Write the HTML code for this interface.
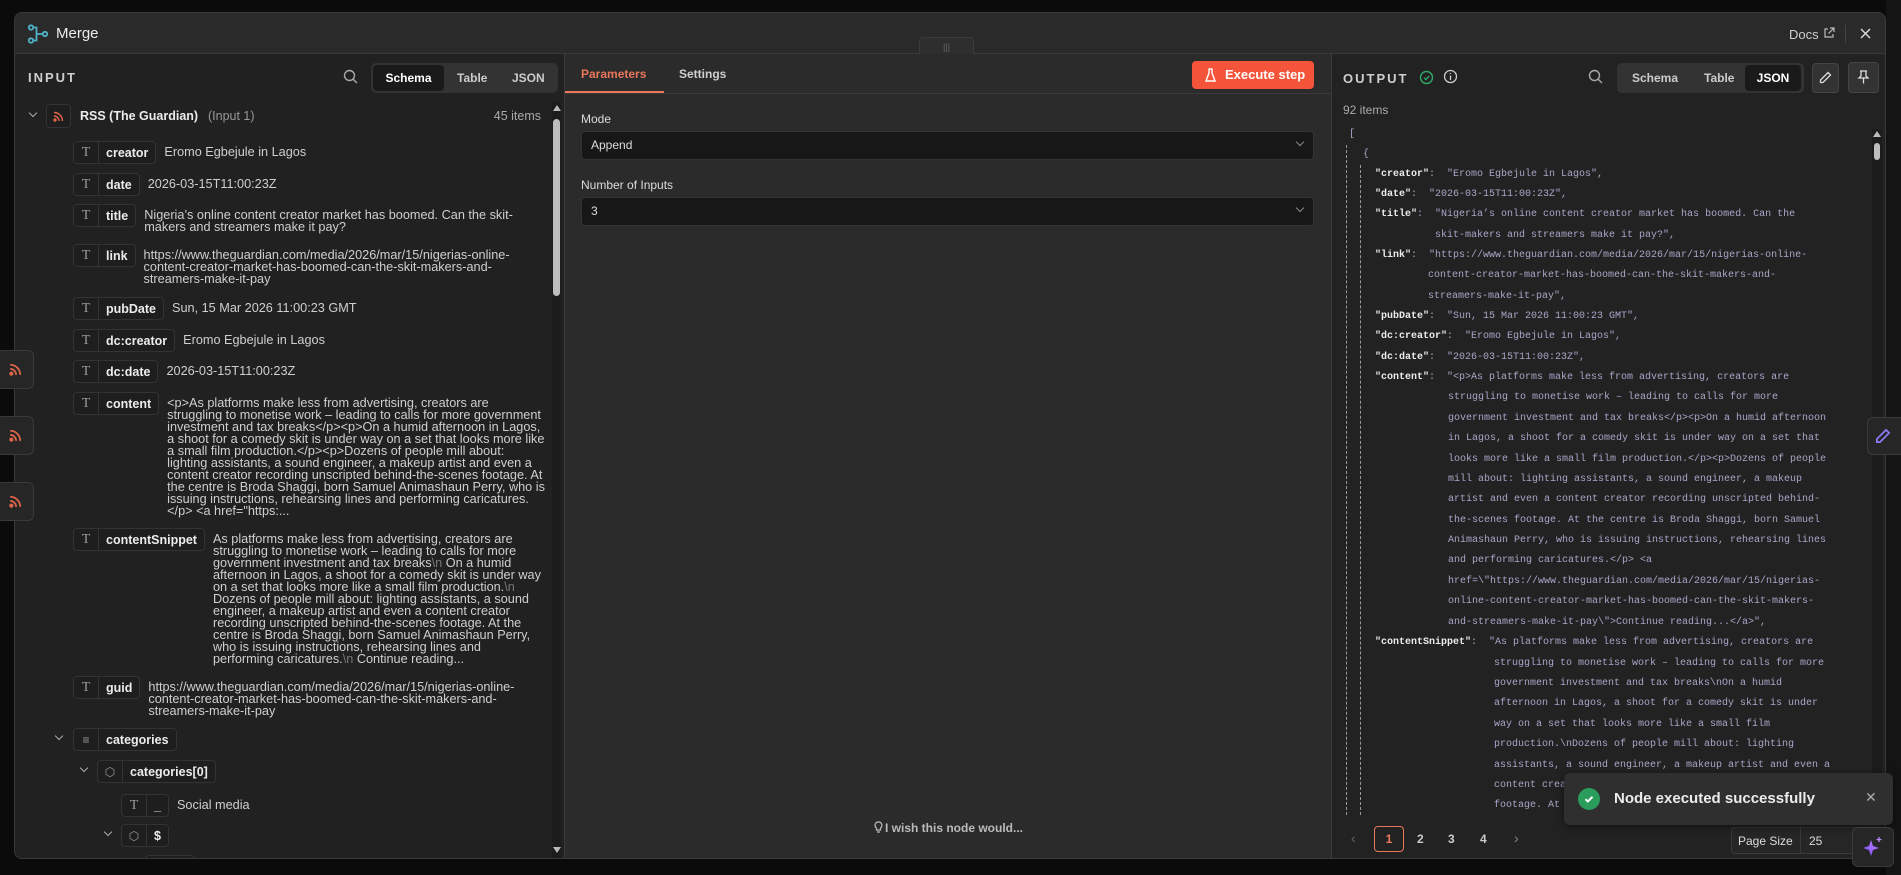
<!DOCTYPE html>
<html><head><meta charset="utf-8"><style>
*{box-sizing:border-box;margin:0;padding:0}
body{width:1901px;height:875px;background:#0b0b0b;font-family:"Liberation Sans",sans-serif;overflow:hidden;position:relative;color:#ddd}
.a{position:absolute}
.modal{left:14px;top:12px;width:1872px;height:847px;background:#2a2a2a;border:1px solid #3a3a3a;border-radius:8px;overflow:hidden}
.row{position:absolute;display:flex;align-items:flex-start;font-size:12.7px;line-height:12px;color:#cfcfcf}
.pill{display:flex;height:23px;border:1px solid #333;border-radius:4px;background:#1e1e1e;flex:none}
.pill .t{width:25px;border-right:1px solid #333;display:flex;align-items:center;justify-content:center;color:#9a9a9a;font-family:"Liberation Serif",serif;font-size:14px}
.pill .k{padding:0 7px;display:flex;align-items:center;color:#ececec;font-weight:bold;font-size:12.5px}
.val{margin-left:8px;margin-top:5px;word-break:normal;overflow-wrap:anywhere}
.chev{position:absolute;width:6px;height:6px;border-right:1.5px solid #aaa;border-bottom:1.5px solid #aaa;transform:rotate(45deg)}
.j{position:absolute;font-family:"Liberation Mono",monospace;font-size:10px;white-space:pre;color:#a9a6c8;line-height:14px}
.j b{color:#ececec}
.rssb{position:absolute;left:-4px;width:38px;height:39px;background:#262626;border:1px solid #3a3a3a;border-radius:6px;display:flex;align-items:center;justify-content:center}
</style></head><body>
<div class="a" style="left:1886px;top:0;width:15px;height:875px;background:#141414"></div>

<div class="a modal">
 <div class="a" style="left:0;top:0;width:1872px;height:41px;background:#2a2a2a;border-bottom:1px solid #3a3a3a"></div>
 <svg class="a" style="left:12px;top:11px" width="22" height="20" viewBox="0 0 22 20" fill="none" stroke="#4fb3c8" stroke-width="1.8"><circle cx="4" cy="3.5" r="2.2"/><circle cx="4" cy="16.5" r="2.2"/><circle cx="18" cy="10" r="2.2"/><path d="M6.5 3.5h3v13h-3M9.5 10h6"/></svg>
 <div class="a" style="left:41px;top:12px;font-size:15px;color:#ececec">Merge</div>
 <div class="a" style="left:1774px;top:14px;font-size:13px;color:#cfcfcf">Docs</div>
 <svg class="a" style="left:1808px;top:14px" width="12" height="12" viewBox="0 0 12 12" fill="none" stroke="#bbb" stroke-width="1.2"><path d="M5 2H2v8h8V7M7 1h4v4M11 1 5.5 6.5"/></svg>
 <div class="a" style="left:1830px;top:12px;width:1px;height:18px;background:#444"></div>
 <svg class="a" style="left:1845px;top:15px" width="11" height="11" viewBox="0 0 11 11" stroke="#ddd" stroke-width="1.4"><path d="M1 1l9 9M10 1l-9 9"/></svg>
 <div class="a" style="left:904px;top:24px;width:55px;height:18px;background:#2e2e2e;border:1px solid #3a3a3a;border-bottom:none;border-radius:4px 4px 0 0;color:#666;font-size:9px;text-align:center;line-height:18px">|||</div>

 <div class="a" style="left:0;top:41px;width:550px;height:806px;background:#212121;border-right:1px solid #3a3a3a"></div>
 <div class="a" style="left:13px;top:57px;font-size:13px;letter-spacing:2px;color:#cfcfcf;font-weight:bold">INPUT</div>
 <svg class="a" style="left:328px;top:56px" width="15" height="15" viewBox="0 0 15 15" fill="none" stroke="#aaa" stroke-width="1.4"><circle cx="6.5" cy="6.5" r="5"/><path d="M10.2 10.2 14 14"/></svg>
 <div class="a" style="left:356px;top:50px;width:187px;height:30px;background:#333;border-radius:5px"></div>
 <div class="a" style="left:358px;top:52px;width:71px;height:26px;background:#1a1a1a;border-radius:4px;font-size:12px;font-weight:bold;color:#fff;text-align:center;line-height:26px">Schema</div>
 <div class="a" style="left:442px;top:58px;font-size:12px;font-weight:bold;color:#ccc">Table</div>
 <div class="a" style="left:497px;top:58px;font-size:12px;font-weight:bold;color:#ccc">JSON</div>
 <div class="a" style="left:537px;top:88px;width:9px;height:758px;background:#1c1c1c"></div>
 <div class="a" style="left:538px;top:92px;width:0;height:0;border-left:4px solid transparent;border-right:4px solid transparent;border-bottom:6px solid #bbb"></div>
 <div class="a" style="left:538px;top:106px;width:7px;height:177px;background:#bdbdbd;border-radius:4px"></div>
 <div class="a" style="left:538px;top:834px;width:0;height:0;border-left:4px solid transparent;border-right:4px solid transparent;border-top:6px solid #bbb"></div>

 <div class="chev" style="left:15px;top:97px"></div>
 <div class="a" style="left:31px;top:91px;width:25px;height:24px;border:1px solid #333;border-radius:4px;background:#1e1e1e"></div>
 <svg class="a" style="left:38px;top:98px" width="11" height="11" viewBox="0 0 11 11" fill="none" stroke="#e0664b" stroke-width="1.4"><circle cx="2" cy="9" r="1" fill="#e0664b"/><path d="M1 5a5 5 0 0 1 5 5M1 1.5a8.5 8.5 0 0 1 8.5 8.5"/></svg>
 <div class="a" style="left:65px;top:96px;font-size:12.5px;color:#ececec;font-weight:bold">RSS (The Guardian)</div>
 <div class="a" style="left:193px;top:96px;font-size:12.5px;color:#999">(Input 1)</div>
 <div class="a" style="left:430px;top:96px;width:96px;text-align:right;font-size:12.5px;color:#aaa">45 items</div>

 <div class="row" style="left:58px;top:128px;width:470px"><div class="pill"><div class="t">T</div><div class="k">creator</div></div><div class="val">Eromo Egbejule in Lagos</div></div>
 <div class="row" style="left:58px;top:160px;width:470px"><div class="pill"><div class="t">T</div><div class="k">date</div></div><div class="val">2026-03-15T11:00:23Z</div></div>
 <div class="row" style="left:58px;top:191px;width:470px"><div class="pill"><div class="t">T</div><div class="k">title</div></div><div class="val">Nigeria’s online content creator market has boomed. Can the skit-makers and streamers make it pay?</div></div>
 <div class="row" style="left:58px;top:231px;width:470px"><div class="pill"><div class="t">T</div><div class="k">link</div></div><div class="val">https://www.theguardian.com/media/2026/mar/15/nigerias-online-content-creator-market-has-boomed-can-the-skit-makers-and-streamers-make-it-pay</div></div>
 <div class="row" style="left:58px;top:284px;width:470px"><div class="pill"><div class="t">T</div><div class="k">pubDate</div></div><div class="val">Sun, 15 Mar 2026 11:00:23 GMT</div></div>
 <div class="row" style="left:58px;top:316px;width:470px"><div class="pill"><div class="t">T</div><div class="k">dc:creator</div></div><div class="val">Eromo Egbejule in Lagos</div></div>
 <div class="row" style="left:58px;top:347px;width:470px"><div class="pill"><div class="t">T</div><div class="k">dc:date</div></div><div class="val">2026-03-15T11:00:23Z</div></div>
 <div class="row" style="left:58px;top:379px;width:472px"><div class="pill"><div class="t">T</div><div class="k">content</div></div><div class="val">&lt;p&gt;As platforms make less from advertising, creators are struggling to monetise work – leading to calls for more government investment and tax breaks&lt;/p&gt;&lt;p&gt;On a humid afternoon in Lagos, a shoot for a comedy skit is under way on a set that looks more like a small film production.&lt;/p&gt;&lt;p&gt;Dozens of people mill about: lighting assistants, a sound engineer, a makeup artist and even a content creator recording unscripted behind-the-scenes footage. At the centre is Broda Shaggi, born Samuel Animashaun Perry, who is issuing instructions, rehearsing lines and performing caricatures.&lt;/p&gt; &lt;a href="https:...</div></div>
 <div class="row" style="left:58px;top:515px;width:470px"><div class="pill"><div class="t">T</div><div class="k">contentSnippet</div></div><div class="val">As platforms make less from advertising, creators are struggling to monetise work – leading to calls for more government investment and tax breaks<span style="color:#777">\n</span> On a humid afternoon in Lagos, a shoot for a comedy skit is under way on a set that looks more like a small film production.<span style="color:#777">\n</span> Dozens of people mill about: lighting assistants, a sound engineer, a makeup artist and even a content creator recording unscripted behind-the-scenes footage. At the centre is Broda Shaggi, born Samuel Animashaun Perry, who is issuing instructions, rehearsing lines and performing caricatures.<span style="color:#777">\n</span> Continue reading...</div></div>
 <div class="row" style="left:58px;top:663px;width:470px"><div class="pill"><div class="t">T</div><div class="k">guid</div></div><div class="val">https://www.theguardian.com/media/2026/mar/15/nigerias-online-content-creator-market-has-boomed-can-the-skit-makers-and-streamers-make-it-pay</div></div>
 <div class="chev" style="left:41px;top:720px"></div>
 <div class="row" style="left:58px;top:715px"><div class="pill"><div class="t" style="font-family:'Liberation Sans';font-size:12px">≡</div><div class="k">categories</div></div></div>
 <div class="chev" style="left:66px;top:752px"></div>
 <div class="row" style="left:82px;top:747px"><div class="pill"><div class="t" style="font-size:12px">⬡</div><div class="k">categories[0]</div></div></div>
 <div class="row" style="left:106px;top:781px"><div class="pill"><div class="t">T</div><div class="k">_</div></div><div class="val">Social media</div></div>
 <div class="chev" style="left:90px;top:816px"></div>
 <div class="row" style="left:106px;top:811px"><div class="pill"><div class="t" style="font-size:12px">⬡</div><div class="k">$</div></div></div>
 <div class="a" style="left:130px;top:842px;width:50px;height:23px;border:1px solid #333;border-radius:4px;background:#1e1e1e"></div>

 <div class="a" style="left:550px;top:41px;width:766px;height:806px;background:#2b2b2b"></div>
 <div class="a" style="left:550px;top:80px;width:766px;height:1px;background:#3a3a3a"></div>
 <div class="a" style="left:566px;top:54px;font-size:12px;color:#e8775b;font-weight:bold">Parameters</div>
 <div class="a" style="left:550px;top:78px;width:99px;height:2px;background:#e8775b"></div>
 <div class="a" style="left:664px;top:54px;font-size:12px;color:#cfcfcf;font-weight:bold">Settings</div>
 <div class="a" style="left:1177px;top:48px;width:122px;height:28px;background:#f4553a;border-radius:4px;color:#fff;font-size:13px;font-weight:bold;line-height:28px;padding-left:33px">Execute step</div>
 <svg class="a" style="left:1190px;top:55px" width="11" height="14" viewBox="0 0 11 14" fill="none" stroke="#fff" stroke-width="1.4"><path d="M3.5 1h4M4 1v4L1 13h9L7 5V1"/></svg>
 <div class="a" style="left:566px;top:99px;font-size:12px;color:#ddd">Mode</div>
 <div class="a" style="left:566px;top:118px;width:733px;height:29px;background:#171717;border:1px solid #333;border-radius:4px;font-size:12px;color:#ddd;line-height:27px;padding-left:9px">Append</div>
 <div class="chev" style="left:1282px;top:126px;border-color:#888"></div>
 <div class="a" style="left:566px;top:165px;font-size:12px;color:#ddd">Number of Inputs</div>
 <div class="a" style="left:566px;top:184px;width:733px;height:29px;background:#171717;border:1px solid #333;border-radius:4px;font-size:12px;color:#ddd;line-height:27px;padding-left:9px">3</div>
 <div class="chev" style="left:1282px;top:192px;border-color:#888"></div>
 <svg class="a" style="left:859px;top:808px" width="9" height="13" viewBox="0 0 9 13" fill="none" stroke="#bbb" stroke-width="1.2"><path d="M4.5 1a3.3 3.3 0 0 0-2 6v2h4V7a3.3 3.3 0 0 0-2-6zM3 11h3"/></svg>
 <div class="a" style="left:870px;top:808px;font-size:12px;color:#bbb;font-weight:bold">I wish this node would...</div>

 <div class="a" style="left:1316px;top:41px;width:556px;height:806px;background:#222;border-left:1px solid #3a3a3a"></div>
 <div class="a" style="left:1328px;top:58px;font-size:13px;letter-spacing:2px;color:#cfcfcf;font-weight:bold">OUTPUT</div>
 <svg class="a" style="left:1404px;top:57px" width="15" height="15" viewBox="0 0 15 15" fill="none" stroke="#2fa86a" stroke-width="1.4"><circle cx="7.5" cy="7.5" r="6"/><path d="M5 7.7l1.8 1.8L10.2 6"/></svg>
 <svg class="a" style="left:1428px;top:56px" width="15" height="15" viewBox="0 0 15 15" fill="none" stroke="#ccc" stroke-width="1.3"><circle cx="7.5" cy="7.5" r="6"/><path d="M7.5 6.5v4.5M7.5 4v1"/></svg>
 <svg class="a" style="left:1573px;top:56px" width="15" height="15" viewBox="0 0 15 15" fill="none" stroke="#aaa" stroke-width="1.4"><circle cx="6.5" cy="6.5" r="5"/><path d="M10.2 10.2 14 14"/></svg>
 <div class="a" style="left:1602px;top:50px;width:187px;height:30px;background:#333;border-radius:5px"></div>
 <div class="a" style="left:1617px;top:58px;font-size:12px;font-weight:bold;color:#ccc">Schema</div>
 <div class="a" style="left:1689px;top:58px;font-size:12px;font-weight:bold;color:#ccc">Table</div>
 <div class="a" style="left:1730px;top:52px;width:56px;height:26px;background:#1a1a1a;border-radius:4px;font-size:12px;font-weight:bold;color:#fff;text-align:center;line-height:26px">JSON</div>
 <div class="a" style="left:1797px;top:50px;width:27px;height:30px;background:#333;border:1px solid #444;border-radius:4px"></div>
 <svg class="a" style="left:1804px;top:58px" width="13" height="13" viewBox="0 0 13 13" fill="none" stroke="#ddd" stroke-width="1.3"><path d="M9 1.5l2.5 2.5L4 11.5H1.5V9z"/></svg>
 <div class="a" style="left:1833px;top:49px;width:31px;height:31px;background:#333;border:1px solid #444;border-radius:4px"></div>
 <svg class="a" style="left:1842px;top:57px" width="13" height="14" viewBox="0 0 13 14" fill="none" stroke="#ddd" stroke-width="1.3"><path d="M3 1h7M4 1v5L2 8h9L9 6V1M6.5 8v5.5"/></svg>
 <div class="a" style="left:1328px;top:90px;font-size:12px;color:#aaa">92 items</div>
 <div class="a" style="left:1857px;top:116px;width:10px;height:690px;background:#1c1c1c"></div>
 <div class="a" style="left:1858px;top:118px;width:0;height:0;border-left:4px solid transparent;border-right:4px solid transparent;border-bottom:6px solid #bbb"></div>
 <div class="a" style="left:1859px;top:130px;width:6px;height:17px;background:#bdbdbd;border-radius:3px"></div>
 <div class="a" style="left:1331px;top:132px;height:670px;border-left:1px dashed #999"></div>
 <div class="a" style="left:1345px;top:152px;height:650px;border-left:1px dashed #999"></div>
 <div class="a" style="left:1318px;top:113px;width:538px;height:690px;overflow:hidden">
  <div style="position:relative">
  <div class="j" style="left:16px;top:2px">[</div>
  <div class="j" style="left:30px;top:22px">{</div>
  <div class="j" style="left:42px;top:42px"><b>"creator"</b>:  "Eromo Egbejule in Lagos",</div>
  <div class="j" style="left:42px;top:62px"><b>"date"</b>:  "2026-03-15T11:00:23Z",</div>
  <div class="j" style="left:42px;top:82px"><b>"title"</b>:  "Nigeria’s online content creator market has boomed. Can the</div>
  <div class="j" style="left:102px;top:103px">skit-makers and streamers make it pay?",</div>
  <div class="j" style="left:42px;top:123px"><b>"link"</b>:  "https://www.theguardian.com/media/2026/mar/15/nigerias-online-</div>
  <div class="j" style="left:95px;top:143px">content-creator-market-has-boomed-can-the-skit-makers-and-</div>
  <div class="j" style="left:95px;top:164px">streamers-make-it-pay",</div>
  <div class="j" style="left:42px;top:184px"><b>"pubDate"</b>:  "Sun, 15 Mar 2026 11:00:23 GMT",</div>
  <div class="j" style="left:42px;top:204px"><b>"dc:creator"</b>:  "Eromo Egbejule in Lagos",</div>
  <div class="j" style="left:42px;top:225px"><b>"dc:date"</b>:  "2026-03-15T11:00:23Z",</div>
  <div class="j" style="left:42px;top:245px"><b>"content"</b>:  "&lt;p&gt;As platforms make less from advertising, creators are</div>
  <div class="j" style="left:115px;top:265px">struggling to monetise work – leading to calls for more</div>
  <div class="j" style="left:115px;top:286px">government investment and tax breaks&lt;/p&gt;&lt;p&gt;On a humid afternoon</div>
  <div class="j" style="left:115px;top:306px">in Lagos, a shoot for a comedy skit is under way on a set that</div>
  <div class="j" style="left:115px;top:327px">looks more like a small film production.&lt;/p&gt;&lt;p&gt;Dozens of people</div>
  <div class="j" style="left:115px;top:347px">mill about: lighting assistants, a sound engineer, a makeup</div>
  <div class="j" style="left:115px;top:367px">artist and even a content creator recording unscripted behind-</div>
  <div class="j" style="left:115px;top:388px">the-scenes footage. At the centre is Broda Shaggi, born Samuel</div>
  <div class="j" style="left:115px;top:408px">Animashaun Perry, who is issuing instructions, rehearsing lines</div>
  <div class="j" style="left:115px;top:428px">and performing caricatures.&lt;/p&gt; &lt;a</div>
  <div class="j" style="left:115px;top:449px">href=\"https://www.theguardian.com/media/2026/mar/15/nigerias-</div>
  <div class="j" style="left:115px;top:469px">online-content-creator-market-has-boomed-can-the-skit-makers-</div>
  <div class="j" style="left:115px;top:490px">and-streamers-make-it-pay\"&gt;Continue reading...&lt;/a&gt;",</div>
  <div class="j" style="left:42px;top:510px"><b>"contentSnippet"</b>:  "As platforms make less from advertising, creators are</div>
  <div class="j" style="left:161px;top:531px">struggling to monetise work – leading to calls for more</div>
  <div class="j" style="left:161px;top:551px">government investment and tax breaks\nOn a humid</div>
  <div class="j" style="left:161px;top:571px">afternoon in Lagos, a shoot for a comedy skit is under</div>
  <div class="j" style="left:161px;top:592px">way on a set that looks more like a small film</div>
  <div class="j" style="left:161px;top:612px">production.\nDozens of people mill about: lighting</div>
  <div class="j" style="left:161px;top:633px">assistants, a sound engineer, a makeup artist and even a</div>
  <div class="j" style="left:161px;top:653px">content creator recording unscripted behind-the-scenes</div>
  <div class="j" style="left:161px;top:673px">footage. At the centre is</div>
  </div>
 </div>
 <div class="a" style="left:1336px;top:817px;font-size:14px;color:#666">‹</div>
 <div class="a" style="left:1359px;top:813px;width:30px;height:26px;border:1px solid #e8775b;border-radius:4px;color:#e8775b;font-size:12px;font-weight:bold;text-align:center;line-height:24px">1</div>
 <div class="a" style="left:1402px;top:819px;font-size:12px;font-weight:bold;color:#ccc">2</div>
 <div class="a" style="left:1433px;top:819px;font-size:12px;font-weight:bold;color:#ccc">3</div>
 <div class="a" style="left:1465px;top:819px;font-size:12px;font-weight:bold;color:#ccc">4</div>
 <div class="a" style="left:1499px;top:817px;font-size:14px;color:#888">›</div>
 <div class="a" style="left:1716px;top:814px;width:130px;height:27px;border:1px solid #3a3a3a;border-radius:4px;background:#262626"></div>
 <div class="a" style="left:1785px;top:814px;width:1px;height:27px;background:#3a3a3a"></div>
 <div class="a" style="left:1723px;top:821px;font-size:12px;color:#ddd">Page Size</div>
 <div class="a" style="left:1794px;top:821px;font-size:12px;color:#ddd">25</div>
</div>

<div class="rssb" style="top:350px"><svg width="13" height="13" viewBox="0 0 11 11" fill="none" stroke="#e0664b" stroke-width="1.5"><circle cx="2" cy="9" r="1" fill="#e0664b"/><path d="M1 5a5 5 0 0 1 5 5M1 1.5a8.5 8.5 0 0 1 8.5 8.5"/></svg></div>
<div class="rssb" style="top:416px"><svg width="13" height="13" viewBox="0 0 11 11" fill="none" stroke="#e0664b" stroke-width="1.5"><circle cx="2" cy="9" r="1" fill="#e0664b"/><path d="M1 5a5 5 0 0 1 5 5M1 1.5a8.5 8.5 0 0 1 8.5 8.5"/></svg></div>
<div class="rssb" style="top:482px"><svg width="13" height="13" viewBox="0 0 11 11" fill="none" stroke="#e0664b" stroke-width="1.5"><circle cx="2" cy="9" r="1" fill="#e0664b"/><path d="M1 5a5 5 0 0 1 5 5M1 1.5a8.5 8.5 0 0 1 8.5 8.5"/></svg></div>
<div class="a" style="left:1867px;top:417px;width:40px;height:38px;background:#262626;border:1px solid #3a3a3a;border-radius:6px"></div>
<svg class="a" style="left:1875px;top:428px" width="16" height="16" viewBox="0 0 13 13" fill="none" stroke="#8b7cf6" stroke-width="1.4"><path d="M9 1.5l2.5 2.5L4 11.5H1.5V9z"/></svg>

<div class="a" style="left:1564px;top:773px;width:329px;height:52px;background:#2f2f2f;border-radius:6px;box-shadow:0 2px 8px rgba(0,0,0,.5)"></div>
<div class="a" style="left:1578px;top:788px;width:22px;height:22px;border-radius:50%;background:#2a9d5c"></div>
<svg class="a" style="left:1582px;top:792px" width="14" height="14" viewBox="0 0 14 14" fill="none" stroke="#fff" stroke-width="2"><path d="M3.5 7.2l2.3 2.3 4.7-4.7"/></svg>
<div class="a" style="left:1614px;top:790px;font-size:15px;font-weight:bold;color:#ececec">Node executed successfully</div>
<div class="a" style="left:1865px;top:789px;font-size:14px;color:#aaa">✕</div>
<div class="a" style="left:1852px;top:827px;width:42px;height:40px;background:#262626;border:1px solid #3a3a3a;border-radius:6px"></div>
<svg class="a" style="left:1862px;top:836px" width="22" height="22" viewBox="0 0 22 22"><defs><linearGradient id="g" x1="0" y1="1" x2="1" y2="0"><stop offset="0" stop-color="#7c4dff"/><stop offset="1" stop-color="#c084fc"/></linearGradient></defs><path d="M9 4 L11 10 L17 12 L11 14 L9 20 L7 14 L1 12 L7 10Z" fill="url(#g)"/><path d="M17 1v5M14.5 3.5h5" stroke="#c084fc" stroke-width="1.3"/></svg>
</body></html>
